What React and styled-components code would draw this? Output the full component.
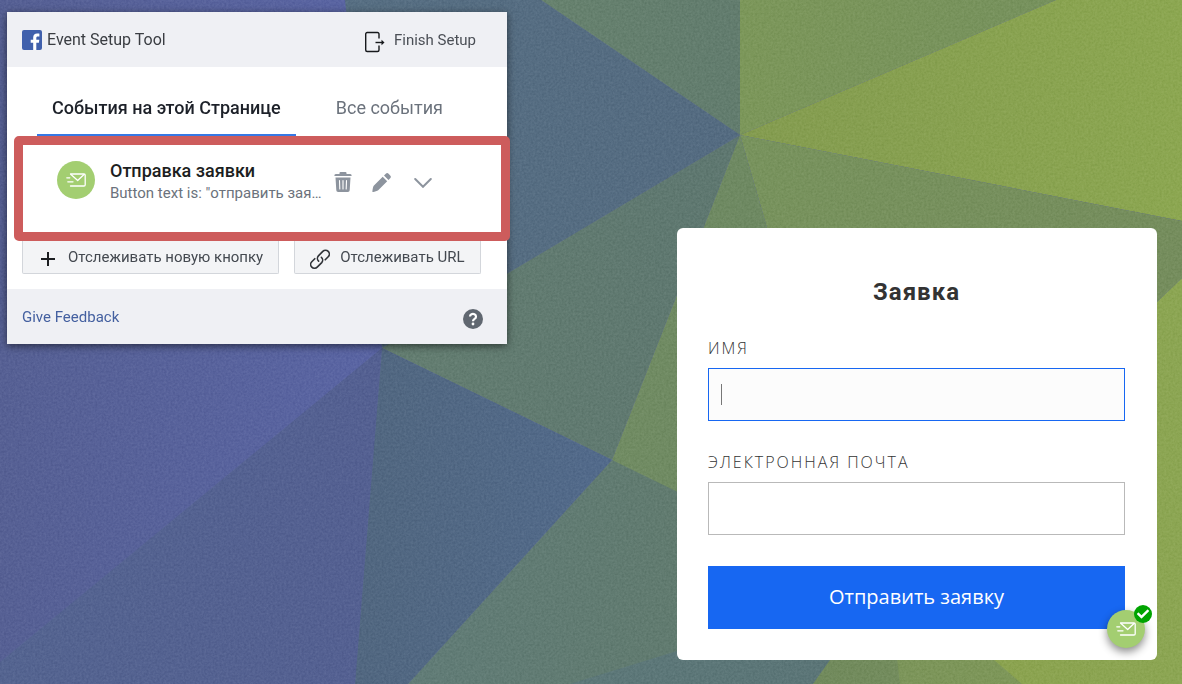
import styled, { createGlobalStyle } from "styled-components"
import { FaCheck } from "react-icons/fa"

const GlobalStyle = createGlobalStyle`
    * {
        box-sizing: border-box;
    }

    body {
        margin: 0;
        font-family: Roboto, sans-serif;
    }

    button, input {
        font-family: inherit;
    }
`

const Page = styled.main`
    position: relative;
    min-height: 100vh;
    display: flex;
    justify-content: space-between;
    align-items: flex-start;
    padding: 12px 25px 24px 7px;
    background-color: #58629b;
    overflow: hidden;
`

const Backdrop = styled.svg`
    position: absolute;
    inset: 0;
    width: 100%;
    height: 100%;
`

const Grain = styled.rect`
    mix-blend-mode: soft-light;
`

const ToolPanel = styled.section`
    position: relative;
    width: 500px;
    background-color: #fff;
    box-shadow: 0 2px 8px rgba(0, 0, 0, 0.55);
`

const PanelBar = styled.div`
    display: flex;
    align-items: center;
    justify-content: space-between;
    height: 55px;
    padding: 0 24px 0 15px;
    background-color: #eff0f4;
`

const ToolName = styled.h1`
    display: flex;
    align-items: center;
    gap: 5px;
    margin: 0;
    font-size: 16px;
    font-weight: 400;
    color: #3a3d42;
`

const FinishButton = styled.button`
    display: flex;
    align-items: center;
    gap: 8px;
    padding: 0;
    margin-right: 7px;
    border: none;
    background: none;
    font-size: 15px;
    color: #4b4f56;

    svg {
        margin-top: 4px;
    }
`

const Tabs = styled.nav`
    display: flex;
    gap: 25px;
    padding: 12px 30px 0 30px;
`

const Tab = styled.button`
    height: 57px;
    padding: 2px 15px 0;
    border: none;
    border-bottom: 2px solid ${({$active}) => ($active ? `#3578e5` : `transparent`)};
    background: none;
    font-size: 18px;
    font-weight: ${({$active}) => ($active ? 500 : 400)};
    color: ${({$active}) => ($active ? `#1d2129` : `#6b727c`)};
`

const EventRow = styled.div`
    position: relative;
    display: flex;
    align-items: flex-start;
    height: 105px;
    margin: 0 -3px 0 7px;
    padding: 16px 68px 0 34px;
    border: 9px solid #cd5c5c;
    border-radius: 5px;
    background-color: #fff;
`

const EventBadge = styled.span`
    position: relative;
    display: flex;
    flex-shrink: 0;
    align-items: center;
    justify-content: center;
    width: 38px;
    height: 38px;
    border-radius: 50%;
    background-color: #a3ce71;
`

const EventText = styled.div`
    flex: 1;
    min-width: 0;
    margin: 0 8px 0 15px;
`

const EventTitle = styled.h2`
    margin: 0;
    font-size: 18px;
    line-height: 20px;
    font-weight: 500;
    color: #1c1e21;
`

const EventRule = styled.p`
    margin: 0;
    font-size: 15px;
    line-height: 24px;
    white-space: nowrap;
    color: #6b727c;
`

const EventActions = styled.div`
    display: flex;
    gap: 18px;
    padding-top: 11px;
`

const IconButton = styled.button`
    display: flex;
    align-items: center;
    justify-content: center;
    width: 20px;
    height: 20px;
    padding: 0;
    border: none;
    background: none;
    color: #8d949e;

    &:last-child {
        margin-left: 4px;
    }
`

const HelpButton = styled(IconButton)`
    margin-top: 4px;
`

const TrackRow = styled.div`
    display: flex;
    gap: 15px;
    padding: 0 26px 15px 15px;
`

const TrackButton = styled.button`
    display: flex;
    align-items: center;
    gap: 10px;
    height: 33px;
    padding: 0 15px;
    border: 1px solid #d3d6db;
    border-top: none;
    border-radius: 0 0 2px 2px;
    background-color: #f3f4f6;
    font-size: 15px;
    white-space: nowrap;
    color: #444950;

    svg {
        margin-top: 4px;
    }
`

const FeedbackLink = styled.a`
    font-size: 15px;
    text-decoration: none;
    color: #4460a0;
`

const FormCard = styled.form`
    position: relative;
    display: flex;
    flex-direction: column;
    width: 480px;
    margin-top: 216px;
    padding: 48px 32px 31px 31px;
    border-radius: 6px;
    background-color: #fff;
    font-family: "Open Sans", sans-serif;
`

const FormTitle = styled.h2`
    margin: 0 0 30px;
    font-family: Roboto, sans-serif;
    font-size: 24px;
    line-height: 32px;
    font-weight: 700;
    letter-spacing: 1px;
    text-align: center;
    color: #333;
`

const FieldLabel = styled.label`
    margin-bottom: 10px;
    font-size: 16px;
    line-height: 20px;
    font-weight: 300;
    letter-spacing: 2px;
    text-transform: uppercase;
    color: #333;
`

const FieldInput = styled.input`
    height: 53px;
    margin-bottom: 31px;
    padding: 0 12px;
    border: 1px solid #b9b9b9;
    border-radius: 0;
    outline: none;
    font-size: 16px;
    color: #333;

    &:focus {
        border-color: #1767f2;
        background-color: #fcfcfc;
    }

    /* steady caret while the field is empty */
    &:focus:placeholder-shown {
        caret-color: transparent;
        background-image: linear-gradient(#777, #777);
        background-position: 12px center;
        background-size: 1px 21px;
        background-repeat: no-repeat;
    }
`

const SubmitButton = styled.button`
    height: 63px;
    padding: 0 0 2px;
    border: none;
    background-color: #1767f2;
    font-size: 20px;
    color: #fff;
`

const FloatingBadge = styled(EventBadge)`
    position: absolute;
    right: 12px;
    bottom: 12px;
    box-shadow: 0 4px 8px rgba(0, 0, 0, 0.45);
`

const CheckMark = styled.span`
    position: absolute;
    top: -5px;
    right: -7px;
    display: flex;
    align-items: center;
    justify-content: center;
    width: 18px;
    height: 18px;
    border-radius: 50%;
    background-color: #00a400;
    color: #fff;
    font-size: 12px;
`

const shapes = [
    { points: '0,0 345,0 382,348 0,662', from: '#555f93', to: '#5964a3' },
    { points: '0,662 382,348 355,684 0,684', from: '#53638f', to: '#535f91' },
    { points: '345,0 541,0 740,135 382,348', from: '#566e82', to: '#536a80' },
    { points: '541,0 740,0 740,135', from: '#66816d', to: '#617b6d' },
    { points: '740,0 1056,0 740,135', from: '#7b9659', to: '#75905c' },
    { points: '1056,0 1182,0 1182,221 740,135', from: '#839b4f', to: '#8ba650' },
    { points: '740,135 612,460 382,348', from: '#637d70', to: '#5d766f' },
    { points: '382,348 612,460 408,684 355,684', from: '#50667f', to: '#51698a' },
    { points: '612,460 740,135 900,684', from: '#708b62', to: '#6a8560' },
    { points: '612,460 900,600 900,684 408,684', from: '#607b76', to: '#607968' },
    { points: '740,135 1182,221 1182,278 900,549 900,684', from: '#77925c', to: '#748c5c' },
    { points: '1182,278 1182,684 900,684 900,549', from: '#8aa14d', to: '#8ba552' },
    { points: '570,684 677,651 850,632 813,684', from: '#5c7778', to: '#5a7476' },
    { points: '813,684 850,632 895,640 900,684', from: '#70895b', to: '#728b5c' },
    { points: '900,684 895,640 971,640 1022,684', from: '#7b9459', to: '#7d9658' },
]

const PolygonBackdrop = () => {
    return(
        <Backdrop viewBox="0 0 1182 684" preserveAspectRatio="xMidYMid slice" aria-hidden="true">
            <defs>
                {shapes.map(({ from, to }, index) => (
                    <linearGradient key={index} id={'facet' + index}>
                        <stop offset="0" stopColor={from} />
                        <stop offset="1" stopColor={to} />
                    </linearGradient>
                ))}
                <filter id="grain" x="0" y="0" width="100%" height="100%" colorInterpolationFilters="sRGB">
                    <feTurbulence type="fractalNoise" baseFrequency="0.45" numOctaves="2" seed="4" />
                    <feColorMatrix values="1 0 0 0 0.05  1 0 0 0 0.05  1 0 0 0 0.05  0 0 0 0 1" />
                </filter>
            </defs>
            {shapes.map(({ points }, index) => (
                <polygon key={index} points={points} fill={'url(#facet' + index + ')'} />
            ))}
            <Grain width="1182" height="684" filter="url(#grain)" opacity="0.2" />
        </Backdrop>
    )
}

const FacebookLogo = () => {
    return(
        <svg width="20" height="20" viewBox="0 0 20 20" aria-hidden="true">
            <rect width="20" height="20" rx="2" fill="#4060ac" />
            <path d="M11.2 20v-7.3H8.7V9.8h2.5V7.6c0-2.6 1.6-4 3.9-4 1.1 0 2 .1 2.3.1v2.7h-1.6c-1.2 0-1.5.6-1.5 1.5v1.9h3l-.4 2.9h-2.6V20z" fill="#fff" />
        </svg>
    )
}

const ExitIcon = () => {
    return(
        <svg width="22" height="22" viewBox="0 0 22 22" fill="none" stroke="#17191c" strokeWidth="1.4" aria-hidden="true">
            <path d="M15 7.5V3a1.5 1.5 0 0 0-1.5-1.5H3.2A1.5 1.5 0 0 0 1.7 3v16a1.5 1.5 0 0 0 1.5 1.5h10.3A1.5 1.5 0 0 0 15 19v-4.5" />
            <path d="M11.5 11.5h7" />
            <path d="M17.5 8.7l3 2.8-3 2.8z" fill="#17191c" stroke="none" />
        </svg>
    )
}

const MailIcon = () => {
    return(
        <svg width="20" height="14" viewBox="0 0 20 14" fill="none" stroke="#fff" strokeWidth="1.3" strokeLinejoin="round" strokeLinecap="round" aria-hidden="true">
            <path d="M4.5 1h13.5a1.2 1.2 0 0 1 1.2 1.2v9.6a1.2 1.2 0 0 1-1.2 1.2H4.5" />
            <path d="M5 1.5l6.7 6 6.3-6" />
            <path d="M.8 4.8h3M1.8 8.8h5.2" />
        </svg>
    )
}

const TrashIcon = () => {
    return(
        <svg width="18" height="20" viewBox="0 0 18 20" aria-hidden="true">
            <path d="M5.5 2V1a1 1 0 0 1 1-1h5a1 1 0 0 1 1 1v1h3.5a1.5 1.5 0 0 1 1.5 2H.5a1.5 1.5 0 0 1 1.5-2z" fill="currentColor" />
            <path d="M1.5 5.5h15l-.8 12.8a1.8 1.8 0 0 1-1.8 1.7H4.1a1.8 1.8 0 0 1-1.8-1.7z" fill="currentColor" />
            <path d="M5.5 8.5l.3 8.5M9 8.5V17M12.5 8.5l-.3 8.5" stroke="#fff" strokeWidth="1.1" strokeLinecap="round" />
        </svg>
    )
}

const PencilIcon = () => {
    return(
        <svg width="19" height="19" viewBox="0 0 19 19" fill="currentColor" aria-hidden="true">
            <path d="M10.7 3.8l4.5 4.5-9 9c-.8.8-3.7 1.5-5 1.7-.6.1-.9-.2-.8-.8.2-1.3.6-4.6 1.3-5.4z" />
            <path d="M12 2.5L13.8.8a2 2 0 0 1 2.8 0l1.6 1.6a2 2 0 0 1 0 2.8L16.5 7z" />
        </svg>
    )
}

const ChevronIcon = () => {
    return(
        <svg width="18" height="12" viewBox="0 0 18 12" fill="none" stroke="currentColor" strokeWidth="2" strokeLinecap="round" aria-hidden="true">
            <path d="M1.2 3l7.8 7.8L16.8 3" />
        </svg>
    )
}

const PlusIcon = () => {
    return(
        <svg width="20" height="20" viewBox="0 0 20 20" stroke="#1c1e21" strokeWidth="2" aria-hidden="true">
            <path d="M3 10h14M10 3v14" />
        </svg>
    )
}

const LinkIcon = () => {
    return(
        <svg width="20" height="20" viewBox="0 0 20 20" fill="none" stroke="#303338" strokeWidth="1.6" strokeLinecap="round" aria-hidden="true">
            <path d="M8.6 12.2a3.8 3.8 0 0 1-.2-5.3l4.4-4.5a3.8 3.8 0 0 1 5.4 5.4l-3 3" />
            <path d="M11.4 8.3a3.8 3.8 0 0 1 .3 5.3l-4.5 4.5a3.8 3.8 0 0 1-5.4-5.4l3-3" />
        </svg>
    )
}

const HelpIcon = () => {
    return(
        <svg width="20" height="20" viewBox="0 0 20 20" fill="none" aria-hidden="true">
            <circle cx="10" cy="10" r="10" fill="#606770" />
            <path d="M7 7.6a3 2.7 0 1 1 4.6 2.3c-1.1.7-1.6 1-1.6 2.3" stroke="#fff" strokeWidth="2.2" />
            <circle cx="10" cy="15" r="1.4" fill="#fff" />
        </svg>
    )
}

const EventSetupTool = () => {
    return(
        <ToolPanel>
            <PanelBar>
                <ToolName><FacebookLogo />Event Setup Tool</ToolName>
                <FinishButton type="button"><ExitIcon />Finish Setup</FinishButton>
            </PanelBar>
            <Tabs>
                <Tab type="button" $active>События на этой Странице</Tab>
                <Tab type="button">Все события</Tab>
            </Tabs>
            <EventRow>
                <EventBadge><MailIcon /></EventBadge>
                <EventText>
                    <EventTitle>Отправка заявки</EventTitle>
                    <EventRule>Button text is: "отправить зая…</EventRule>
                </EventText>
                <EventActions>
                    <IconButton type="button" aria-label="Delete"><TrashIcon /></IconButton>
                    <IconButton type="button" aria-label="Edit"><PencilIcon /></IconButton>
                    <IconButton type="button" aria-label="Expand"><ChevronIcon /></IconButton>
                </EventActions>
            </EventRow>
            <TrackRow>
                <TrackButton type="button"><PlusIcon />Отслеживать новую кнопку</TrackButton>
                <TrackButton type="button"><LinkIcon />Отслеживать URL</TrackButton>
            </TrackRow>
            <PanelBar as="footer">
                <FeedbackLink href="#feedback">Give Feedback</FeedbackLink>
                <HelpButton type="button" aria-label="Help"><HelpIcon /></HelpButton>
            </PanelBar>
        </ToolPanel>
    )
}

const RequestForm = () => {
    return(
        <FormCard onSubmit={(e) => e.preventDefault()}>
            <FormTitle>Заявка</FormTitle>
            <FieldLabel htmlFor="name">Имя</FieldLabel>
            <FieldInput id="name" type="text" placeholder=" " autoFocus />
            <FieldLabel htmlFor="email">Электронная почта</FieldLabel>
            <FieldInput id="email" type="email" placeholder=" " />
            <SubmitButton type="submit">Отправить заявку</SubmitButton>
            <FloatingBadge>
                <MailIcon />
                <CheckMark><FaCheck /></CheckMark>
            </FloatingBadge>
        </FormCard>
    )
}

export default function App () {

    return(
        <>
            <GlobalStyle />
            <Page>
                <PolygonBackdrop />
                <EventSetupTool />
                <RequestForm />
            </Page>
        </>
    )
}
